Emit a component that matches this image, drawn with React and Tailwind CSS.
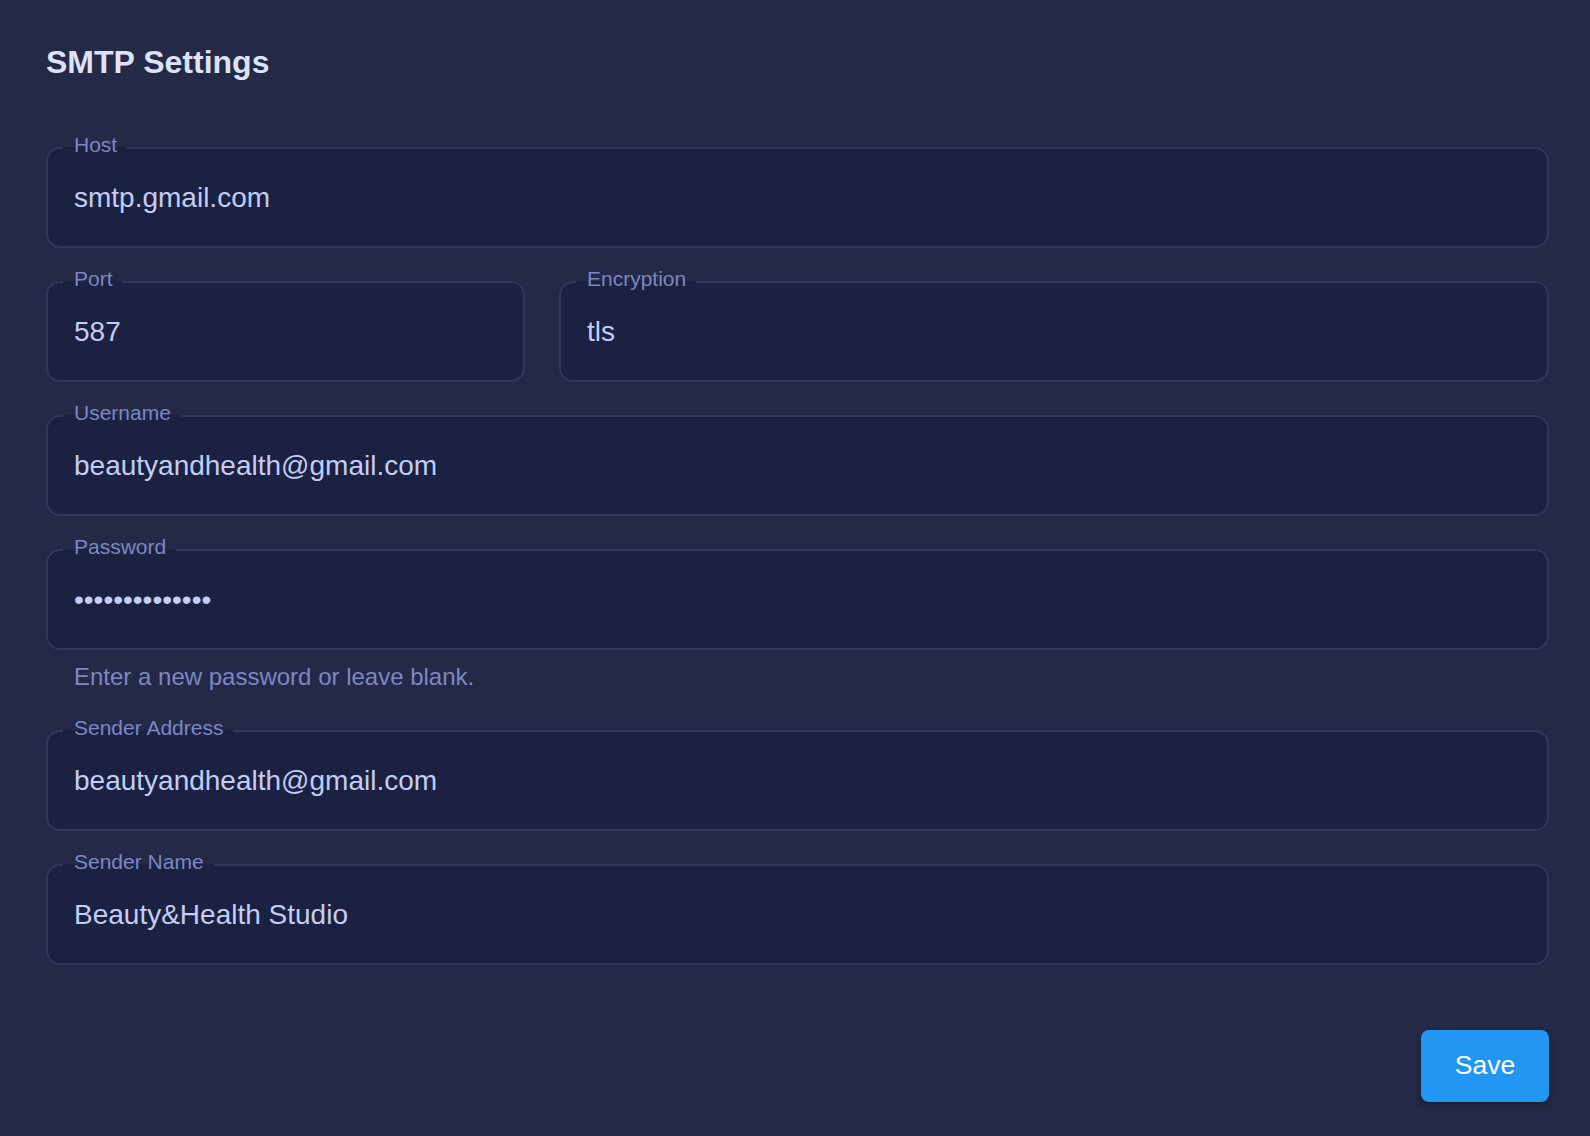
import React from "react";

const font = { fontFamily: '"Liberation Sans", Arial, sans-serif' };

function Field({ label, value, type = "text" }) {
  return (
    <fieldset className="min-w-0 rounded-[14px] border-2 border-[#30385b] bg-[#1b2140]">
      <legend className="ml-[15px] pl-[11px] pr-[10px] pb-[6px] text-[21px] leading-[15px] text-[#7b88c4]">
        {label}
      </legend>
      <div className="flex h-[88px] items-center pb-[8px] pl-[26px] pr-[26px]">
        <input
          type={type}
          readOnly
          defaultValue={value}
          className="w-full bg-transparent text-[28px] leading-[34px] text-[#c3cdf5] outline-none"
        />
      </div>
    </fieldset>
  );
}

export default function App() {
  return (
    <div
      style={font}
      className="min-h-[1136px] bg-[#232946] pl-[46px] pr-[41px] pt-[43px] pb-[34px]"
    >
      <h1 className="text-[32px] font-bold leading-[38px] text-[#dde2f6]">SMTP Settings</h1>
      <form className="mt-[56px] flex flex-col gap-[23px]" onSubmit={(e) => e.preventDefault()}>
        <Field label="Host" value="smtp.gmail.com" />
        <div className="grid grid-cols-[479px_1fr] gap-[34px]">
          <Field label="Port" value="587" />
          <Field label="Encryption" value="tls" />
        </div>
        <Field label="Username" value="beautyandhealth@gmail.com" />
        <div className="flex flex-col">
          <Field label="Password" value="abcdefghijklmn" type="password" />
          <p className="mt-[11px] mb-[4px] pl-[28px] text-[24px] leading-[32px] text-[#7b88c4]">
            Enter a new password or leave blank.
          </p>
        </div>
        <Field label="Sender Address" value="beautyandhealth@gmail.com" />
        <Field label="Sender Name" value="Beauty&Health Studio" />
        <div className="mt-[42px] flex justify-end">
          <button
            type="submit"
            className="h-[72px] w-[128px] rounded-[8px] bg-[#2196f3] text-[26.5px] text-white shadow-[0_3px_6px_rgba(0,0,0,0.3)]"
          >
            Save
          </button>
        </div>
      </form>
    </div>
  );
}
